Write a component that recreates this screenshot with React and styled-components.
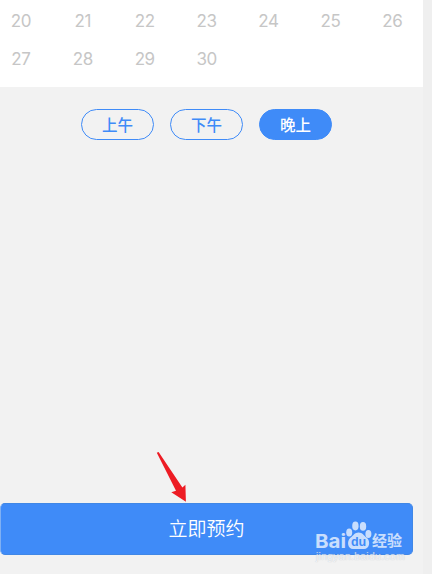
// App.jsx
import React from 'react';
import styled, { createGlobalStyle } from 'styled-components';

const weeks = [
  ['20', '21', '22', '23', '24', '25', '26'],
  ['27', '28', '29', '30'],
];

const periods = ['上午', '下午', '晚上'];

const App = () => {
  return (
    <>
      <GlobalStyle />
      <Page>
        <Screen>
          <Calendar>
            {weeks.map((week) => (
              <Week key={week[0]}>
                {week.map((day) => (
                  <Day key={day}>{day}</Day>
                ))}
              </Week>
            ))}
          </Calendar>
          <Periods>
            {periods.map((period) => (
              <Period key={period} $active={period === '晚上'}>
                {period}
              </Period>
            ))}
          </Periods>
          <Footer>
            <SubmitButton>立即预约</SubmitButton>
          </Footer>
        </Screen>
        <Arrow viewBox="0 0 32 52">
          <path d="M1.8 2.8 L3.6 2 L27.4 37.6 L30.4 34.8 L30.9 51.8 L16.3 42.2 L21 40.8 Z" />
        </Arrow>
        <Watermark>
          <Brand>
            <BrandName viewBox="0 0 31 20">
              <text x="0" y="16.5" textLength="31" lengthAdjust="spacingAndGlyphs">
                Bai
              </text>
            </BrandName>
            <Paw viewBox="0 0 26 28">
              <ellipse cx="3.2" cy="11.4" rx="3" ry="4" />
              <ellipse cx="9.4" cy="5" rx="3.2" ry="4.4" />
              <ellipse cx="17" cy="5.4" rx="3.2" ry="4.3" />
              <ellipse cx="22.4" cy="13" rx="3" ry="4" />
              <path d="M12.6 11.4 C16.5 11.4 17.8 14.4 20.8 16.8 C25 20.6 23.4 28 18 28 H7 C1.8 28 0.4 20.6 4.4 16.8 C7.4 14.4 8.6 11.4 12.6 11.4 Z" />
              <text x="12.6" y="25" textAnchor="middle">du</text>
            </Paw>
            <BrandLabel>经验</BrandLabel>
          </Brand>
          <Site>jingyan.baidu.com</Site>
        </Watermark>
      </Page>
    </>
  );
};

const GlobalStyle = createGlobalStyle`
  body {
    margin: 0;
    font-family: 'Noto Sans CJK SC', sans-serif;
  }
`;

const Page = styled.div`
  position: relative;
  width: 432px;
  height: 574px;
  overflow: hidden;
  background-color: #efefef;
`;

const Screen = styled.main`
  display: flex;
  flex-direction: column;
  width: 423px;
  height: 100%;
  overflow: hidden;
  background-color: #f2f2f2;
`;

const Calendar = styled.section`
  height: 87px;
  padding-top: 2px;
  box-sizing: border-box;
  background-color: #fff;
`;

const Week = styled.div`
  display: grid;
  grid-template-columns: repeat(7, 61.9px);
  margin-left: -10px;
`;

const Day = styled.span`
  height: 38px;
  line-height: 38px;
  text-align: center;
  font-family: Inter, sans-serif;
  font-size: 17px;
  font-weight: 400;
  letter-spacing: -0.4px;
  color: #c6c6c6;
`;

const Periods = styled.div`
  display: flex;
  gap: 16px;
  padding: 22px 0 0 81px;
`;

const Period = styled.button`
  width: 73px;
  height: 31px;
  padding: 0;
  border: 1px solid #3f8bf8;
  border-radius: 16px;
  background-color: ${({ $active }) => ($active ? '#3f8bf8' : 'transparent')};
  color: ${({ $active }) => ($active ? '#fff' : '#3f8bf8')};
  font-family: inherit;
  font-size: 15.5px;
  font-weight: 500;
  line-height: 29px;
`;

const Footer = styled.footer`
  margin-top: auto;
  padding: 0 10px 19px 0;
`;

const SubmitButton = styled.button`
  display: block;
  width: 100%;
  height: 52px;
  padding: 0 0 2px;
  border: 1px solid #4087e6;
  border-left-color: #7fb0f3;
  border-radius: 5px;
  background-color: #3f8bf8;
  color: #fff;
  font-family: inherit;
  font-size: 19px;
  font-weight: 350;
  line-height: 48px;
`;

const Arrow = styled.svg`
  position: absolute;
  left: 155px;
  top: 450px;
  width: 32px;
  height: 52px;
  fill: #ed1c24;
`;

const Watermark = styled.div`
  position: absolute;
  left: 315px;
  top: 520px;
  width: 100px;
  color: #fff;
  opacity: 0.72;
`;

const Brand = styled.div`
  display: flex;
  align-items: flex-end;
  height: 29px;
`;

const BrandName = styled.svg`
  width: 31px;
  height: 20px;
  margin-bottom: -2px;
  overflow: visible;
  fill: #fff;
  font-family: Inter, sans-serif;
  font-size: 19px;
  font-weight: 700;
`;

const Paw = styled.svg`
  width: 26px;
  height: 28px;
  fill: #fff;

  text {
    fill: #3f8bf8;
    font-family: 'Liberation Sans', sans-serif;
    font-size: 12.5px;
    font-weight: 700;
  }
`;

const BrandLabel = styled.span`
  font-size: 15px;
  font-weight: 700;
  line-height: 18px;
`;

const Site = styled.div`
  padding-left: 1px;
  color: #f4f6fa;
  font-family: 'Liberation Sans', sans-serif;
  font-size: 10.5px;
  letter-spacing: 0.25px;
  line-height: 15px;
  text-shadow: 0 0 1px #a6acb6;
`;

export default App;
